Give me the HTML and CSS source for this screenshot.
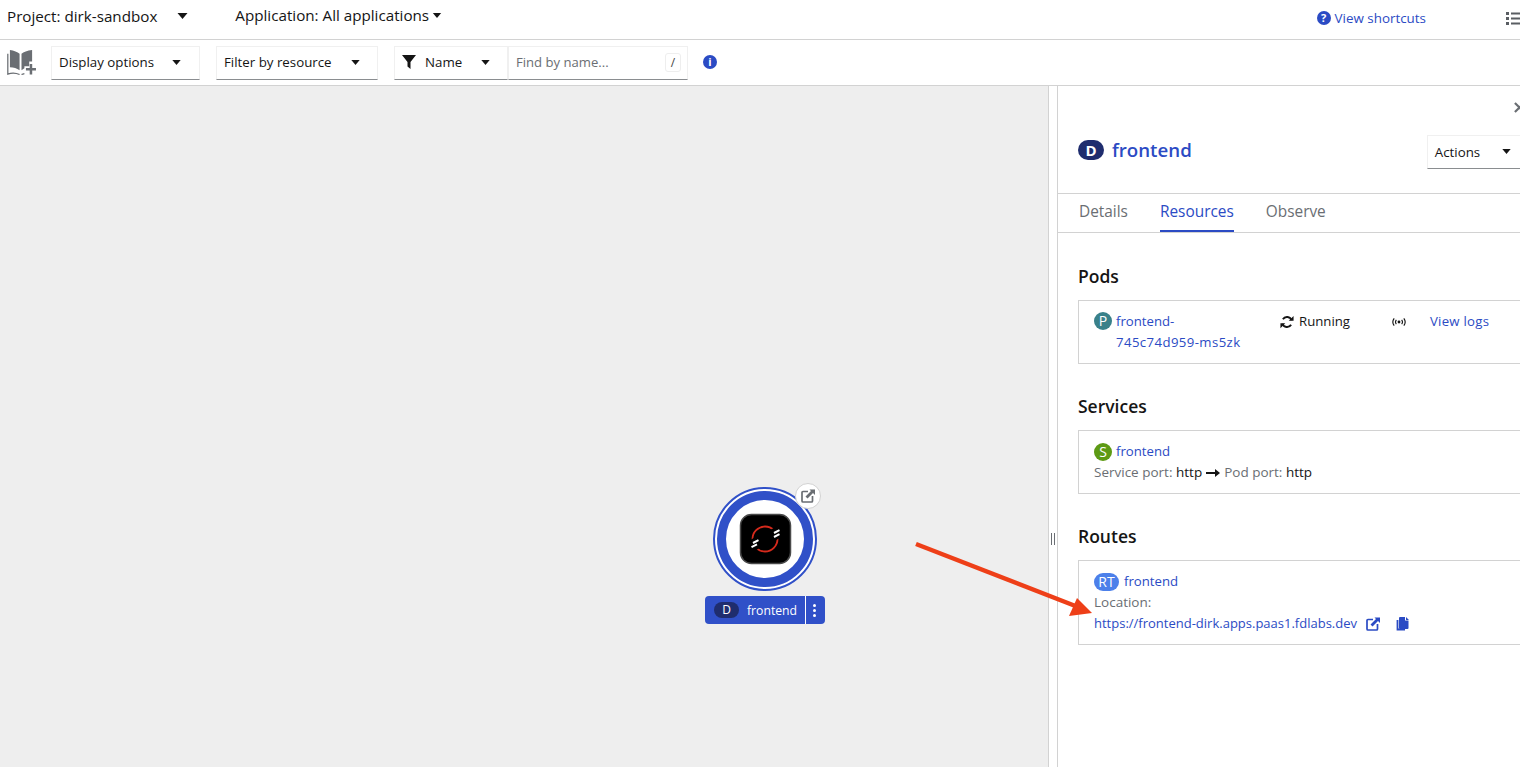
FILE: index.html
```html
<!DOCTYPE html>
<html lang="en">
<head>
    <meta charset="UTF-8">
    <title>Topology</title>
    <link rel="stylesheet" href="styles.css">
</head>
<body>
    <div class="page">
        <div class="topbar">
            <span class="project">Project: dirk-sandbox</span>
            <svg class="caret caret-project" viewBox="0 0 10 6"><path d="M0 0h10L5 6z"/></svg>
            <span class="application">Application: All applications</span>
            <svg class="caret caret-app" viewBox="0 0 10 6"><path d="M0 0h10L5 6z"/></svg>
            <a class="shortcuts">
                <span class="help-dot">?</span>
                View shortcuts
            </a>
            <svg class="list-icon" viewBox="0 0 16 14"><path d="M0 1h3v3H0zM0 6h3v3H0zM0 11h3v3H0z"/><path d="M5 1.500h11v2H5zM5 6.500h11v2H5zM5 11.500h11v2H5z"/></svg>
        </div>

        <div class="toolbar">
            <svg class="book-icon" viewBox="0 0 30 28">
                <path d="M3 1c4 .5 8 2 10 4v17c-3-2-6-3-10-3z"/>
                <path d="M15 5c2-2 6-3.500 11-4v12h-3v5h-5v2l-3 2z"/>
                <path d="M.8 5v21c4-1.500 8-1.500 12.200.5M15 26.500c1-.5 2-.8 3-1" fill="none" stroke="#6a6e73" stroke-width="1.300"/>
                <path d="M23.500 15.500h2.600v4.200h3.900v2.600h-3.900v4.200h-2.600v-4.200h-3.900v-2.600h3.900z"/>
            </svg>
            <div class="select select-display">Display options <svg class="caret" viewBox="0 0 10 6"><path d="M0 0h10L5 6z"/></svg></div>
            <div class="select select-filter">Filter by resource <svg class="caret" viewBox="0 0 10 6"><path d="M0 0h10L5 6z"/></svg></div>
            <div class="select select-name">
                <svg class="funnel" viewBox="0 0 14 14"><path d="M0 0h14L8.500 7v7l-3-2.500V7z"/></svg>
                Name
                <svg class="caret" viewBox="0 0 10 6"><path d="M0 0h10L5 6z"/></svg>
            </div>
            <div class="search">
                <span>Find by name...</span>
                <kbd class="slash">/</kbd>
            </div>
            <span class="info-dot">i</span>
        </div>

        <div class="main">
            <div class="canvas">
                <div class="node">
                    <svg class="node-graphic" viewBox="0 0 120 112">
                        <circle cx="60" cy="55" r="51" fill="#fff" stroke="#3050c8" stroke-width="2"/>
                        <circle cx="60" cy="55" r="43.500" fill="#fff" stroke="#3050c8" stroke-width="9"/>
                        <rect x="35.500" y="30.500" width="50" height="49" rx="11" fill="#000" stroke="#4a4a4a" stroke-width="1.500"/>
                        <circle cx="60" cy="55" r="12.500" fill="none" stroke="#d62a1c" stroke-width="1.800"/>
                        <path d="M67 45l6 10M47 55l6 10" stroke="#000" stroke-width="5"/>
                        <path d="M69 49l5.500-2.800M69 53l5.500-2.800M48 59l5.500-2.800M46.500 63.200l5.500-2.800" stroke="#fff" stroke-width="2"/>
                    </svg>
                    <span class="node-link">
                        <svg viewBox="0 0 14 14"><path d="M7 2.500H2a1 1 0 0 0-1 1V12a1 1 0 0 0 1 1h8.500a1 1 0 0 0 1-1V7" fill="none" stroke="#6a6e73" stroke-width="1.700"/><path d="M8.500 0.500H14V6l-2-2-5.500 5.500-2-2L10 2z" fill="#6a6e73"/></svg>
                    </span>
                    <div class="node-label">
                        <span class="node-badge">D</span>
                        <span class="node-name">frontend</span>
                        <span class="node-menu"><i></i><i></i><i></i></span>
                    </div>
                </div>
            </div>
            <div class="gutter"><span class="grip"></span></div>

            <div class="panel">
                <div class="panel-close">
                    <svg viewBox="0 0 12 12"><path d="M1 1l10 10M11 1L1 11" stroke="#6a6e73" stroke-width="2.400" fill="none"/></svg>
                </div>
                <div class="panel-head">
                    <span class="badge badge-d">D</span>
                    <span class="panel-title">frontend</span>
                    <div class="select select-actions">Actions <svg class="caret" viewBox="0 0 10 6"><path d="M0 0h10L5 6z"/></svg></div>
                </div>
                <div class="tabs">
                    <span class="tab">Details</span>
                    <span class="tab active">Resources</span>
                    <span class="tab">Observe</span>
                </div>

                <div class="section section-first">
                    <h2>Pods</h2>
                    <div class="card card-pod">
                        <div class="pod-name">
                            <span class="badge badge-p">P</span>
                            <a>frontend-<br><span class="pod-id">745c74d959-ms5zk</span></a>
                        </div>
                        <div class="pod-status">
                            <svg class="sync" viewBox="0 0 16 16">
                                <path d="M13.200 6A5.500 5.500 0 0 0 3.300 4.800M2.800 10a5.500 5.500 0 0 0 9.900 1.200" fill="none" stroke="#151515" stroke-width="2.200"/>
                                <path d="M10 6.500h5.500V1zM6 9.500H.5V15z" fill="#151515"/>
                            </svg>
                            Running
                        </div>
                        <svg class="podcast" viewBox="0 0 16 10">
                            <circle cx="8" cy="5" r="1.600" fill="#151515"/>
                            <path d="M5 2.500a4 4 0 0 0 0 5M11 2.500a4 4 0 0 1 0 5M2.500 .8a7 7 0 0 0 0 8.400M13.500 .8a7 7 0 0 1 0 8.400" fill="none" stroke="#151515" stroke-width="1.300"/>
                        </svg>
                        <a class="logs">View logs</a>
                    </div>
                </div>

                <div class="section">
                    <h2>Services</h2>
                    <div class="card">
                        <div class="row">
                            <span class="badge badge-s">S</span>
                            <a>frontend</a>
                        </div>
                        <div class="row muted">
                            Service port:&nbsp;<b>http</b>
                            <svg class="long-arrow" viewBox="0 0 14 8"><path d="M0 3h9V0l5 4-5 4V5H0z"/></svg>
                            Pod port:&nbsp;<b>http</b>
                        </div>
                    </div>
                </div>

                <div class="section">
                    <h2>Routes</h2>
                    <div class="card">
                        <div class="row">
                            <span class="badge badge-rt">RT</span>
                            <a>frontend</a>
                        </div>
                        <div class="row muted">Location:</div>
                        <div class="row">
                            <a class="route-url">https://frontend-dirk.apps.paas1.fdlabs.dev</a>
                            <svg class="open-link" viewBox="0 0 14 14"><path d="M7 2.500H2a1 1 0 0 0-1 1V12a1 1 0 0 0 1 1h8.500a1 1 0 0 0 1-1V7" fill="none" stroke="#2b4bc4" stroke-width="1.700"/><path d="M8.500 0.500H14V6l-2-2-5.500 5.500-2-2L10 2z" fill="#2b4bc4"/></svg>
                            <svg class="copy" viewBox="0 0 13 14"><path d="M4 0h5v3.500h3.500V11a1 1 0 0 1-1 1H4a1 1 0 0 1-1-1V1a1 1 0 0 1 1-1zM10 0l3 3h-3z" fill="#2b4bc4"/><path d="M1.500 3v9.500H9" fill="none" stroke="#2b4bc4" stroke-width="1.800"/></svg>
                        </div>
                    </div>
                </div>
            </div>
        </div>

        <svg class="callout" viewBox="0 0 1520 767">
            <path d="M916 544L1078 607" stroke="#ee3f18" stroke-width="4.500"/>
            <path d="M1092 613L1077 598L1069 616z" fill="#ee3f18"/>
        </svg>
    </div>
</body>
</html>
```

FILE: styles.css
```css
html, body {
    margin: 0;
    padding: 0;
}
body {
    font-family: "Open Sans", sans-serif;
    font-size: 14px;
    color: #151515;
    background: #fff;
    overflow: hidden;
}
a {
    color: #2b4bc4;
}
.page {
    position: relative;
    width: 1520px;
    height: 767px;
    overflow: hidden;
}
.caret {
    width: 9px;
    height: 5px;
    fill: #151515;
    flex: none;
}

/* top bar */
.topbar {
    display: flex;
    align-items: center;
    height: 31px;
    padding: 0 0 8px 7px;
    border-bottom: 1px solid #d2d2d2;
    font-size: 15.2px;
}
.caret-project {
    width: 11px;
    height: 6px;
    margin-left: 20px;
}
.application {
    margin-left: 47px;
    margin-bottom: 1px;
}
.caret-app {
    width: 10px;
    height: 5px;
    margin-left: 3px;
}
.shortcuts {
    display: flex;
    align-items: center;
    margin-left: auto;
    margin-top: 5px;
    font-size: 13.4px;
}
.help-dot {
    width: 14px;
    height: 14px;
    margin-right: 4px;
    border-radius: 50%;
    background: #2b4bc4;
    color: #fff;
    font-size: 11px;
    font-weight: 700;
    line-height: 14px;
    text-align: center;
}
.list-icon {
    width: 16px;
    height: 14px;
    margin-top: 5px;
    margin-left: 80px;
    margin-right: -2px;
    fill: #5a5e63;
}

/* toolbar */
.toolbar {
    display: flex;
    align-items: center;
    height: 45px;
    padding-left: 7px;
    border-bottom: 1px solid #d2d2d2;
}
.book-icon {
    width: 29px;
    height: 27px;
    margin-right: 15px;
    fill: #6a6e73;
}
.select {
    display: flex;
    align-items: center;
    justify-content: space-between;
    box-sizing: border-box;
    height: 34px;
    padding: 0 18px 1px 7px;
    border: 1px solid #f0f0f0;
    border-bottom-color: #8a8d90;
    font-size: 13.3px;
}
.select-display {
    width: 149px;
    margin-right: 16px;
}
.select-filter {
    width: 162px;
    margin-right: 16px;
    padding-right: 17px;
}
.select-name {
    justify-content: flex-start;
    width: 114px;
    padding-right: 17px;
}
.select-name .caret {
    margin-left: auto;
}
.funnel {
    width: 14px;
    height: 14px;
    margin-right: 9px;
    fill: #151515;
}
.search {
    display: flex;
    align-items: center;
    justify-content: space-between;
    box-sizing: border-box;
    width: 180px;
    height: 34px;
    padding: 0 6px 1px 7px;
    border: 1px solid #f0f0f0;
    border-bottom-color: #8a8d90;
    color: #6a6e73;
    font-size: 13.1px;
}
.slash {
    width: 14px;
    height: 17px;
    border: 1px solid #eee;
    border-radius: 3px;
    font-family: inherit;
    font-size: 12px;
    line-height: 17px;
    text-align: center;
    color: #444;
}
.info-dot {
    width: 14px;
    height: 14px;
    margin-left: 15px;
    margin-bottom: 1px;
    border-radius: 50%;
    background: #2b4bc4;
    color: #fff;
    font-size: 11px;
    font-weight: 700;
    line-height: 14px;
    text-align: center;
}

/* main area */
.main {
    display: flex;
    height: 681px;
}
.canvas {
    position: relative;
    flex: none;
    width: 1048px;
    background: #eee;
    border-right: 1px solid #d2d2d2;
}
.gutter {
    position: relative;
    flex: none;
    width: 8px;
}
.grip {
    position: absolute;
    left: 2px;
    top: 447px;
    width: 2px;
    height: 12px;
    border-left: 1px solid #6a6e73;
    border-right: 1px solid #6a6e73;
}

/* topology node */
.node {
    position: absolute;
    left: 705px;
    top: 398px;
    width: 120px;
}
.node-graphic {
    display: block;
    width: 120px;
    height: 112px;
}
.node-link {
    position: absolute;
    left: 90px;
    top: -1px;
    display: flex;
    align-items: center;
    justify-content: center;
    box-sizing: border-box;
    width: 26px;
    height: 26px;
    border: 1px solid #d2d2d2;
    border-radius: 50%;
    background: #fff;
}
.node-link svg {
    width: 14px;
    height: 14px;
}
.node-label {
    display: flex;
    align-items: center;
    box-sizing: border-box;
    width: 120px;
    height: 28px;
    padding-left: 9px;
    border-radius: 4px;
    background: #3050c8;
    color: #fff;
    font-size: 12.2px;
}
.node-badge {
    width: 25px;
    height: 16px;
    border-radius: 8px;
    background: #1f2d6e;
    font-size: 12px;
    line-height: 16px;
    text-align: center;
}
.node-name {
    margin-left: 8px;
    width: 58px;
}
.node-menu {
    display: flex;
    flex-direction: column;
    align-items: center;
    justify-content: center;
    gap: 2px;
    box-sizing: border-box;
    width: 18px;
    height: 28px;
    border-left: 1px solid #fff;
}
.node-menu i {
    width: 3px;
    height: 3px;
    border-radius: 50%;
    background: #fff;
}

/* side panel */
.panel {
    flex: none;
    box-sizing: border-box;
    width: 480px;
    border-left: 1px solid #d2d2d2;
}
.panel-close {
    display: flex;
    justify-content: flex-end;
    box-sizing: border-box;
    height: 42px;
    padding-top: 16px;
    margin-right: 12px;
}
.panel-close svg {
    width: 11px;
    height: 11px;
}
.panel-head {
    display: flex;
    align-items: center;
    box-sizing: border-box;
    height: 66px;
    padding: 0 0 22px 20px;
    border-bottom: 1px solid #d2d2d2;
}
.panel-title {
    margin-left: 8px;
    font-size: 18.7px;
    font-weight: 600;
    color: #2b4bc4;
}
.select-actions {
    width: 103px;
    margin-left: 235px;
    margin-top: 5px;
}
.badge {
    display: inline-block;
    flex: none;
    height: 18px;
    border-radius: 9px;
    color: #fff;
    line-height: 18px;
    text-align: center;
    font-size: 14px;
}
.badge-d {
    width: 26px;
    height: 20px;
    border-radius: 10px;
    background: #1f2d6e;
    font-size: 15px;
    font-weight: 700;
    line-height: 20px;
}
.badge-p {
    width: 18px;
    background: #39818a;
}
.badge-s {
    width: 18px;
    background: #5d9a14;
}
.badge-rt {
    width: 25px;
    background: #4c80ea;
}
.tabs {
    display: flex;
    gap: 32px;
    height: 38px;
    padding-left: 21px;
    border-bottom: 1px solid #d2d2d2;
    font-size: 15.4px;
    line-height: 35px;
    color: #6a6e73;
}
.tab.active {
    height: 36px;
    border-bottom: 2px solid #2b4bc4;
    color: #2b4bc4;
}
.section {
    padding: 29px 0 0 20px;
}
.section-first {
    padding-top: 30px;
}
h2 {
    margin: 0 0 11px;
    font-size: 17.500px;
    font-weight: 600;
    line-height: 26px;
}
.card {
    box-sizing: border-box;
    width: 460px;
    padding: 10px 15px;
    border: 1px solid #d2d2d2;
    line-height: 21px;
    font-size: 13.2px;
}
.card a {
    color: #2b4bc4;
}
.row {
    display: flex;
    align-items: center;
    height: 21px;
}
.row .badge {
    margin-right: 4px;
}
.row .badge-rt {
    margin-right: 5px;
}
.route-url {
    font-size: 13px;
}
.muted {
    color: #6a6e73;
    font-size: 13.5px;
}
.muted b {
    font-weight: 400;
    color: #151515;
}
.long-arrow {
    width: 14px;
    height: 8px;
    margin: 0 4px;
    fill: #151515;
}
.card-pod {
    display: flex;
    align-items: flex-start;
}
.pod-name {
    position: relative;
    box-sizing: border-box;
    width: 186px;
    padding-left: 22px;
}
.pod-name .badge {
    position: absolute;
    left: 0;
    top: 1px;
}
.pod-id {
    letter-spacing: 0.4px;
}
.pod-status {
    display: flex;
    align-items: center;
    width: 112px;
    height: 21px;
}
.sync {
    width: 14px;
    height: 14px;
    margin-right: 5px;
}
.podcast {
    width: 14px;
    height: 10px;
    margin-top: 6px;
    margin-right: 24px;
}
.logs {
    letter-spacing: 0.25px;
}
.open-link {
    width: 14px;
    height: 14px;
    margin-left: 9px;
}
.copy {
    width: 13px;
    height: 14px;
    margin-left: 16px;
}

/* red arrow drawn over the screenshot */
.callout {
    position: absolute;
    left: 0;
    top: 0;
    width: 1520px;
    height: 767px;
    pointer-events: none;
}
```
